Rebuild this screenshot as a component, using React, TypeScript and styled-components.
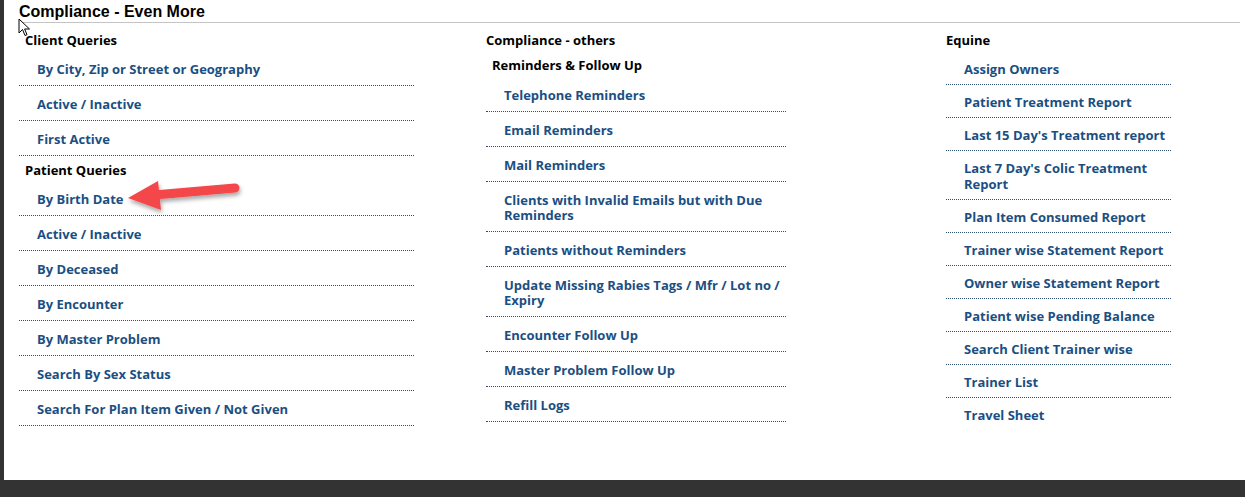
import styled, { createGlobalStyle } from 'styled-components'

const GlobalStyle = createGlobalStyle`
  html, body {
    margin: 0;
    padding: 0;
    background: #333333;
  }
  body {
    font-family: "Open Sans", Lato, sans-serif;
  }
`

const clientQueries = ['By City, Zip or Street or Geography', 'Active / Inactive', 'First Active']
const patientQueries = [
  'By Birth Date',
  'Active / Inactive',
  'By Deceased',
  'By Encounter',
  'By Master Problem',
  'Search By Sex Status',
  'Search For Plan Item Given / Not Given',
]
const reminders = [
  'Telephone Reminders',
  'Email Reminders',
  'Mail Reminders',
  'Clients with Invalid Emails but with Due Reminders',
  'Patients without Reminders',
  'Update Missing Rabies Tags / Mfr / Lot no / Expiry',
  'Encounter Follow Up',
  'Master Problem Follow Up',
  'Refill Logs',
]
const equine = [
  'Assign Owners',
  'Patient Treatment Report',
  "Last 15 Day's Treatment report",
  "Last 7 Day's Colic Treatment Report",
  'Plan Item Consumed Report',
  'Trainer wise Statement Report',
  'Owner wise Statement Report',
  'Patient wise Pending Balance',
  'Search Client Trainer wise',
  'Trainer List',
  'Travel Sheet',
]

const Page = styled.div`
  position: relative;
  margin-left: 4px;
  height: 480px;
  background: #ffffff;
  padding: 0 5px 0 15px;
  box-sizing: border-box;
`

const Title = styled.h1`
  margin: 0;
  padding-top: 1px;
  font-family: "Liberation Sans", Arial, sans-serif;
  font-size: 16px;
  font-weight: bold;
  line-height: 21px;
  color: #000;
  border-bottom: 1px solid #c4c4c4;
`

const Columns = styled.div`
  display: grid;
  grid-template-columns: 467px 460px 1fr;
  padding-top: 3px;
`

const Column = styled.div<{ $width: number }>`
  width: ${(p) => p.$width}px;
  display: flex;
  flex-direction: column;
`

const Heading = styled.div<{ $indent?: number; $top?: number; $bottom?: number }>`
  padding: ${(p) => p.$top ?? 6}px 0 ${(p) => p.$bottom ?? 3}px ${(p) => p.$indent ?? 0}px;
  font-size: 13px;
  font-weight: 700;
  line-height: 16px;
  color: #000;
`

const LinkRow = styled.a<{ $compact?: boolean; $last?: boolean }>`
  display: block;
  padding: ${(p) => (p.$compact ? '9px 0 7px 18px' : '11px 0 8px 18px')};
  font-size: 13px;
  font-weight: 700;
  line-height: ${(p) => (p.$compact ? 16 : 15)}px;
  color: #1b4f82;
  text-decoration: none;
  border-bottom: 1px dotted ${(p) => (p.$last ? 'transparent' : '#2c4c70')};
  cursor: pointer;
`

const Arrow = styled.svg`
  position: absolute;
  left: 116px;
  top: 173px;
  overflow: visible;
`

const Cursor = styled.svg`
  position: absolute;
  left: 14px;
  top: 18px;
`

const Links = ({ items, compact, noLastLine }: { items: string[]; compact?: boolean; noLastLine?: boolean }) => (
  <>
    {items.map((label, i) => (
      <LinkRow key={label + i} $compact={compact} $last={noLastLine && i === items.length - 1}>
        {label}
      </LinkRow>
    ))}
  </>
)

export default function App() {
  return (
    <>
      <GlobalStyle />
      <Page>
        <Title>Compliance - Even More</Title>
        <Columns>
          <Column $width={395}>
            <Heading $indent={6}>Client Queries</Heading>
            <Links items={clientQueries} />
            <Heading $indent={6}>Patient Queries</Heading>
            <Links items={patientQueries} />
          </Column>
          <Column $width={300}>
            <Heading>Compliance - others</Heading>
            <Heading $indent={6} $top={6} $bottom={4}>Reminders &amp; Follow Up</Heading>
            <Links items={reminders} />
          </Column>
          <Column $width={225}>
            <Heading $bottom={4}>Equine</Heading>
            <Links items={equine} compact noLastLine />
          </Column>
        </Columns>

        <Arrow width="130" height="50" viewBox="0 0 130 50">
          <defs>
            <filter id="arrowShadow" x="-20%" y="-40%" width="140%" height="180%">
              <feDropShadow dx="1" dy="3" stdDeviation="2" floodColor="#000" floodOpacity="0.35" />
            </filter>
          </defs>
          <g filter="url(#arrowShadow)" fill="#f4474a">
            <line x1="34" y1="22" x2="115" y2="15" stroke="#f4474a" strokeWidth="9" strokeLinecap="round" />
            <polygon points="8,25 38,8 41,37" />
          </g>
        </Arrow>

        <Cursor width="14" height="20" viewBox="0 0 14 20">
          <path d="M1 1 L1 15 L4.5 11.5 L7 17.5 L9 16.7 L6.6 11 L11.5 11 Z" fill="#fff" stroke="#000" strokeWidth="1" strokeLinejoin="round" />
        </Cursor>
      </Page>
    </>
  )
}
